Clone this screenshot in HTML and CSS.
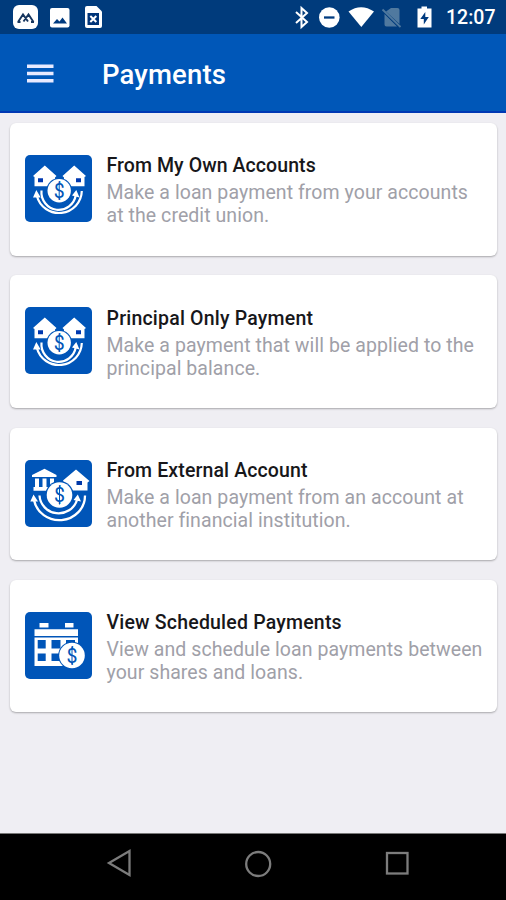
FILE: index.html
```html
<!DOCTYPE html>
<html lang="en">
<head>
<meta charset="utf-8">
<title>Payments</title>
<link rel="stylesheet" href="styles.css">
</head>
<body>
<svg class="defs" width="0" height="0" aria-hidden="true">
  <defs>
    <g id="house"><path d="M8 21 19.8 10.5 31.5 21 30 22.500V31.200H9.500V22Z" fill="#fff"/><path d="M13 23.200h5v4h-5z" fill="#0038b0"/></g>
    <g id="arcs" fill="none" stroke="#fff" stroke-width="2.200">
      <path d="M16.500 35.500A17.300 17.700 0 0 0 50.800 40"/>
      <path d="M11.900 41A22.800 22.500 0 0 0 56.800 36"/>
      <path d="M11.300 35 15.700 42.500H8Z M51.300 35 54.500 42.500 47 40.500Z" fill="#fff" stroke="none"/>
    </g>
    <g id="coin"><circle cx="34.200" cy="35.800" r="12.900" fill="#0055b8"/><circle cx="34.200" cy="35.800" r="11.700" fill="#fff"/><text class="dollar" x="34.200" y="42.600">$</text><path d="M34.200 27.300v17" stroke="#0055b8" stroke-width="1"/></g>
  </defs>
</svg>
<div class="screen">
  <div class="status">
    <svg class="notifications" width="110" height="34" viewBox="0 0 110 34">
      <rect x="13" y="5" width="25" height="24" rx="6" fill="#fff"/>
      <path d="M18 22 23 14.500 28 21.500 M23.500 21.500 28.500 14.500 33.500 22 M17.500 22h3 M31 22h3" fill="none" stroke="#17365f" stroke-width="1.900"/>
      <rect x="50" y="8" width="19.500" height="19.500" rx="2" fill="#fff"/>
      <path d="M53 23.500 57 19 59.500 21.500 62.500 17.500 67 23.500Z" fill="#003b80"/>
      <path d="M87 6h9.500l5.500 5.500V26a2 2 0 0 1-2 2H87a2 2 0 0 1-2-2V8a2 2 0 0 1 2-2Z" fill="#fff"/>
      <path d="M87.500 13h11.500v12H87.500z" fill="#003478"/><path d="m90.300 16 6 6m0-6-6 6" stroke="#fff" stroke-width="2"/>
    </svg>
    <svg class="indicators" width="150" height="34" viewBox="290 0 150 34">
      <path d="m296 12 11 10-5.500 5V8l5.500 5-11 10" fill="none" stroke="#fff" stroke-width="2"/>
      <circle cx="329.300" cy="17.500" r="10.300" fill="#fff"/><path d="M324 17.500h10.500" stroke="#003b80" stroke-width="2.300"/>
      <path d="M348.500 11.500Q361 3 374 11.500L361.300 27Z" fill="#fff"/>
      <path d="M391 8h6.500a2 2 0 0 1 2 2v14L386 11.500ZM384.500 14 397 26.500H386.500a2 2 0 0 1-2-2Z" fill="#50799f"/><path d="m382.500 9.500 18 17.500" stroke="#50799f" stroke-width="1.800"/>
      <path d="M421.500 6.500h5.500v2h4.500V27.500H417.500V8.500h4Z" fill="#fff"/><path d="m425.300 12-5 7h3.500v5.500l5-7.500h-3.500Z" fill="#003b80"/>
    </svg>
    <span class="clock">12:07</span>
  </div>
  <header class="toolbar">
    <svg class="menu" width="27" height="20" viewBox="0 0 27 20"><path d="M0 2.200h26.500M0 9.500h26.500M0 16.800h26.500" stroke="#e8eaff" stroke-width="3.400"/></svg>
    <h1>Payments</h1>
  </header>
  <main>
    <article class="card">
      <svg class="icon" viewBox="0 0 67 67"><use href="#house"/><use href="#house" transform="matrix(-1 0 0 1 69 0)"/><use href="#arcs"/><use href="#coin"/></svg>
      <div class="copy"><h2 class="t1">From My Own Accounts</h2><p>Make a loan payment from your accounts<br>at the credit union.</p></div>
    </article>
    <article class="card">
      <svg class="icon" viewBox="0 0 67 67"><use href="#house"/><use href="#house" transform="matrix(-1 0 0 1 69 0)"/><use href="#arcs"/><use href="#coin"/></svg>
      <div class="copy"><h2 class="t2">Principal Only Payment</h2><p>Make a payment that will be applied to the<br>principal balance.</p></div>
    </article>
    <article class="card">
      <svg class="icon" viewBox="0 0 67 67"><path d="M7 15 19.500 8.800 31.500 15v2H7ZM10 18.500h4V27h-4ZM17.500 18.500h4V27h-4ZM25 18.500h4V27h-4ZM8.500 27h22v3.800H8.500Z" fill="#fff"/>
        <path d="M38 20.500 51 9.500 64.500 21 62.500 22.500V30.500H42Z" fill="#fff"/><path d="M51.500 21h5.500v4h-5.500z" fill="#0038a8"/>
        <g fill="none" stroke="#fff" stroke-width="2.300"><path d="M14.500 35.500A19.200 19 0 0 0 52 40"/><path d="M9 40A25.700 24.500 0 0 0 60 35.500"/><path d="M8.500 34.500 13 41.500H5.300ZM52.800 34.500 56 41.500 48.500 40Z" fill="#fff" stroke="none"/></g>
        <circle cx="34.500" cy="35" r="14" fill="#0055b8"/><circle cx="34.500" cy="35" r="12.800" fill="#fff"/><text class="dollar" x="34.500" y="42">$</text><path d="M34.500 26v18.500" stroke="#0055b8" stroke-width="1"/></svg>
      <div class="copy"><h2 class="t3">From External Account</h2><p>Make a loan payment from an account at<br>another financial institution.</p></div>
    </article>
    <article class="card">
      <svg class="icon" viewBox="0 0 67 67"><path d="M14.500 11h9v4.500h-9ZM40 11h8.500v4.500H40ZM9.500 17.300h43.500v6.700H9.500ZM9.500 25.500h43.500V54H9.500Z" fill="#fff"/>
        <path d="M12.700 28h8v8.500h-8ZM26.500 28h9v8.500h-9ZM41 28h9v8.500h-9ZM12.700 41.500h8V49h-8ZM26.500 41.500h9V49h-9Z" fill="#0055b8"/>
        <circle cx="47" cy="43.500" r="13.800" fill="#0055b8"/><circle cx="47" cy="43.500" r="12.800" fill="#fff"/><text class="dollar" x="47" y="50.500">$</text><path d="M47 35v17" stroke="#0055b8" stroke-width="1"/></svg>
      <div class="copy"><h2 class="t4">View Scheduled Payments</h2><p>View and schedule loan payments between<br>your shares and loans.</p></div>
    </article>
  </main>
  <nav class="navbar">
    <svg width="506" height="66" viewBox="0 834 506 66" fill="none" stroke="#7c7c7c" stroke-width="2.300"><path d="M109 863 129.500 851V875Z"/><circle cx="258.200" cy="864" r="12"/><rect x="387" y="853" width="20.500" height="20.500"/></svg>
  </nav>
</div>
</body>
</html>
```
FILE: styles.css
```css
* { box-sizing: border-box; }
body { margin: 0; font-family: Roboto, sans-serif; background: #efeef3; }
.defs { display: none; }
.screen { width: 506px; height: 900px; display: flex; flex-direction: column; overflow: hidden; }
.status { height: 34px; flex: none; display: flex; align-items: center; background: #003b7c; color: #fff; }
.status svg { flex: none; }
.indicators { margin-left: 180px; }
.clock { margin-left: 6px; padding-top: 1px; font-size: 19.500px; font-weight: 500; letter-spacing: 0; }
.toolbar { height: 79px; flex: none; display: flex; align-items: center; padding: 2px 0 0 27px; background: #0057b8; border-bottom: 2px solid #0038b3; color: #fff; }
.menu { flex: none; }
h1 { margin: 2px 0 0 48px; font-size: 27.500px; font-weight: 500; line-height: 32px; letter-spacing: .15px; }
main { flex: 1; display: flex; flex-direction: column; gap: 19.700px; padding: 10px 9px 0 10px; }
.card { height: 132.600px; flex: none; display: flex; align-items: center; gap: 15px; padding-left: 14.500px; background: #fff; border-radius: 6px; box-shadow: 0 1px 2px rgba(0, 0, 0, .3); }
.icon { width: 67px; height: 67px; flex: none; margin-top: -1.500px; border-radius: 5px; background: #0055b8; }
.dollar { font: 400 19.500px Roboto, sans-serif; fill: #0055b8; text-anchor: middle; }
.copy { white-space: nowrap; margin-top: 3px; }
h2 { margin: 0 0 4px; font-size: 19.500px; line-height: 23px; font-weight: 500; color: #17171a; }
.t1 { letter-spacing: .08px; }
.t2, .t4 { letter-spacing: .2px; }
.t3 { letter-spacing: .13px; }
p { margin: 0; font-size: 19.500px; line-height: 23px; color: #a0a0a8; letter-spacing: .07px; }
.navbar { height: 67px; flex: none; background: #000; border-top: 1px solid #777; }
.navbar svg { display: block; }
```
